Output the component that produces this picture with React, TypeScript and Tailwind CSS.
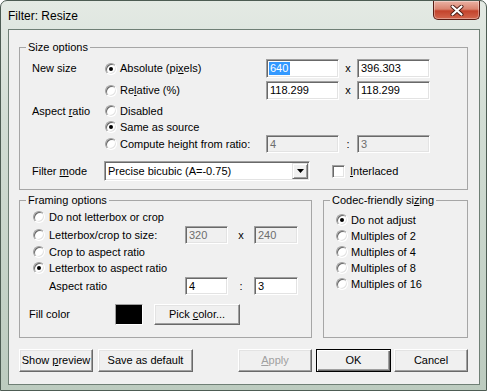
import React from 'react';

// Win32 classic-style controls inside an Aero frame

function Radio({ on }: { on?: boolean }) {
  return (
    <span className="flex h-[12px] w-[12px] shrink-0 items-center justify-center rounded-full border border-t-[#a0a0a0] border-l-[#a0a0a0] border-b-white border-r-white bg-white shadow-[inset_1px_1px_0_#696969,inset_-1px_-1px_0_#e3e3e3]">
      {on && <span className="h-[4px] w-[4px] rounded-full bg-black" />}
    </span>
  );
}

function Check() {
  return (
    <span className="block h-[13px] w-[13px] shrink-0 border border-t-[#a0a0a0] border-l-[#a0a0a0] border-b-white border-r-white bg-white shadow-[inset_1px_1px_0_#696969,inset_-1px_-1px_0_#e3e3e3]" />
  );
}

function Edit({
  value,
  className,
  disabled,
  selected,
}: {
  value: string;
  className: string;
  disabled?: boolean;
  selected?: boolean;
}) {
  return (
    <div
      className={
        'flex shrink-0 items-center border border-t-[#a0a0a0] border-l-[#a0a0a0] border-b-white border-r-white pl-[2px] shadow-[inset_1px_1px_0_#696969,inset_-1px_-1px_0_#e3e3e3] ' +
        (disabled ? 'bg-[#f0f0f0] text-[#6d6d6d] ' : 'bg-white ') +
        className
      }
    >
      <span className={selected ? 'bg-[#3399ff] pr-[2px] pl-[1px] text-white' : 'pl-[1px]'}>{value}</span>
    </div>
  );
}

function Btn({
  children,
  className,
  isDefault,
  disabled,
}: {
  children: React.ReactNode;
  className: string;
  isDefault?: boolean;
  disabled?: boolean;
}) {
  const frame = isDefault
    ? 'border border-black shadow-[inset_1px_1px_0_#fff,inset_-1px_-1px_0_#696969,inset_-2px_-2px_0_#a0a0a0]'
    : 'border border-t-white border-l-white border-b-[#696969] border-r-[#696969] shadow-[inset_-1px_-1px_0_#a0a0a0,inset_1px_1px_0_#e3e3e3]';
  return (
    <div
      className={
        'flex h-[23px] shrink-0 items-center justify-center bg-[#f0f0f0] ' +
        frame +
        (disabled ? ' text-[#a0a0a0]' : '') +
        ' ' +
        className
      }
    >
      {children}
    </div>
  );
}

function Group({
  title,
  className,
  children,
}: {
  title: React.ReactNode;
  className: string;
  children: React.ReactNode;
}) {
  return (
    <fieldset className={'shrink-0 border border-[#a6a6a6] p-0 ' + className}>
      <legend className="ml-[6px] px-[2px] leading-[13px]">{title}</legend>
      {children}
    </fieldset>
  );
}

export default function App() {
  return (
    <div className="flex h-[391px] w-[487px] flex-col overflow-hidden rounded-t-[7px] border border-[#4d5c53] bg-[linear-gradient(180deg,#e4eae4_0%,#d2ddd4_30%,#bccbbf_100%)] font-['Liberation_Sans',Arial,sans-serif] text-[11px] leading-[13px] text-black">
      {/* Title bar */}
      <div className="flex h-[28px] shrink-0 items-start justify-between pl-[7px]">
        <span className="pt-[8px] text-[12px] leading-[14px]">Filter: Resize</span>
        <div className="mr-[6px] flex h-[19px] w-[47px] items-center justify-center rounded-b-[5px] border border-t-0 border-[#5a1d14] bg-[linear-gradient(180deg,#ebb2a4_0%,#da8470_45%,#c3432c_55%,#d3674e_100%)] shadow-[inset_0_0_0_1px_rgba(255,255,255,0.35)]">
          <svg width="14" height="11" viewBox="0 0 14 11">
            <path d="M2.5 1.5 L11.5 9.5 M11.5 1.5 L2.5 9.5" stroke="#4a1c14" strokeWidth="4" strokeLinecap="round" />
            <path d="M2.5 1.5 L11.5 9.5 M11.5 1.5 L2.5 9.5" stroke="#ffffff" strokeWidth="2.2" strokeLinecap="round" />
          </svg>
        </div>
      </div>

      {/* Client area */}
      <div className="ml-[7px] flex h-[356px] w-[472px] shrink-0 flex-col border border-[#6f7f75] bg-[#f0f0f0] pl-[10px]">
        <Group title="Size options" className="mt-[11px] h-[149px] w-[449px]">
          <div className="flex flex-col pl-[12px]">
            <div className="mt-[5px] flex h-[19px] items-center">
              <span className="w-[72px]">New size</span>
              <div className="flex w-[162px] items-center gap-[3px] pl-[1px]">
                <Radio on />
                <span>
                  Absolute (pi<u>x</u>els)
                </span>
              </div>
              <Edit className="h-[19px] w-[73px]" value="640" selected />
              <span className="w-[18px] text-center">x</span>
              <Edit className="h-[19px] w-[73px]" value="396.303" />
            </div>
            <div className="mt-[3px] flex h-[19px] items-center">
              <span className="w-[72px]" />
              <div className="flex w-[162px] items-center gap-[3px] pl-[1px]">
                <Radio />
                <span>
                  Re<u>l</u>ative (%)
                </span>
              </div>
              <Edit className="h-[19px] w-[73px]" value="118.299" />
              <span className="w-[18px] text-center">x</span>
              <Edit className="h-[19px] w-[73px]" value="118.299" />
            </div>
            <div className="mt-[3px] flex h-[16px] items-center">
              <span className="w-[72px]">
                Aspect <u>r</u>atio
              </span>
              <div className="flex items-center gap-[3px] pl-[1px]">
                <Radio />
                <span>Disabled</span>
              </div>
            </div>
            <div className="flex h-[16px] items-center">
              <span className="w-[72px]" />
              <div className="flex items-center gap-[3px] pl-[1px]">
                <Radio on />
                <span>Same as source</span>
              </div>
            </div>
            <div className="flex h-[18px] items-center">
              <span className="w-[72px]" />
              <div className="flex w-[162px] items-center gap-[3px] pl-[1px]">
                <Radio />
                <span>Compute height from ratio:</span>
              </div>
              <Edit className="h-[18px] w-[73px]" value="4" disabled />
              <span className="w-[18px] text-center">:</span>
              <Edit className="h-[18px] w-[73px]" value="3" disabled />
            </div>
            <div className="mt-[8px] flex h-[20px] items-center">
              <span className="w-[72px]">
                Filter <u>m</u>ode
              </span>
              <div className="flex h-[20px] w-[206px] items-stretch border border-t-[#a0a0a0] border-l-[#a0a0a0] border-b-white border-r-white bg-white p-[1px] shadow-[inset_1px_1px_0_#696969,inset_-1px_-1px_0_#e3e3e3]">
                <span className="flex flex-1 items-center pl-[2px]">Precise bicubic (A=-0.75)</span>
                <span className="flex w-[16px] items-center justify-center border border-t-[#e3e3e3] border-l-[#e3e3e3] border-b-[#696969] border-r-[#696969] bg-[#f0f0f0] shadow-[inset_1px_1px_0_#fff,inset_-1px_-1px_0_#a0a0a0]">
                  <svg width="7" height="4" viewBox="0 0 7 4">
                    <path d="M0 0 H7 L3.5 4 Z" fill="#000" />
                  </svg>
                </span>
              </div>
              <span className="ml-[22px]">
                <Check />
              </span>
              <span className="ml-[5px]">
                <u>I</u>nterlaced
              </span>
            </div>
          </div>
        </Group>

        <div className="mt-[4px] flex gap-[11px]">
          <Group title="Framing options" className="h-[144px] w-[293px]">
            <div className="flex flex-col pl-[13px]">
              <div className="mt-[2px] flex h-[16px] items-center gap-[4px]">
                <Radio />
                <span>Do not letterbox or crop</span>
              </div>
              <div className="mt-[1px] flex h-[18px] items-center">
                <div className="flex w-[152px] items-center gap-[4px]">
                  <Radio />
                  <span>Letterbox/crop to size:</span>
                </div>
                <Edit className="h-[18px] w-[43px]" value="320" disabled />
                <span className="w-[26px] text-center">x</span>
                <Edit className="h-[18px] w-[44px]" value="240" disabled />
              </div>
              <div className="flex h-[16px] items-center gap-[4px]">
                <Radio />
                <span>Crop to aspect ratio</span>
              </div>
              <div className="flex h-[16px] items-center gap-[4px]">
                <Radio on />
                <span>Letterbox to aspect ratio</span>
              </div>
              <div className="mt-[1px] flex h-[18px] items-center">
                <span className="w-[152px] pl-[16px]">Aspect ratio</span>
                <Edit className="h-[18px] w-[43px]" value="4" />
                <span className="w-[26px] text-center">:</span>
                <Edit className="h-[18px] w-[44px]" value="3" />
              </div>
              <div className="mt-[9px] ml-[-4px] flex h-[21px] items-center">
                <span className="w-[86px]">Fill color</span>
                <span className="block h-[21px] w-[28px] border border-t-[#a0a0a0] border-l-[#a0a0a0] border-b-white border-r-white bg-black" />
                <Btn className="ml-[11px] !h-[21px] w-[86px]">
                  <span>
                    Pick <u>c</u>olor...
                  </span>
                </Btn>
              </div>
            </div>
          </Group>

          <Group
            title={
              <span>
                Codec-friendly si<u>z</u>ing
              </span>
            }
            className="h-[144px] w-[145px]"
          >
            <div className="flex flex-col pl-[12px]">
              <div className="mt-[5px] flex h-[16px] items-center gap-[3px]">
                <Radio on />
                <span>Do not adjust</span>
              </div>
              {['Multiples of 2', 'Multiples of 4', 'Multiples of 8', 'Multiples of 16'].map((t) => (
                <div key={t} className="flex h-[16px] items-center gap-[3px]">
                  <Radio />
                  <span>{t}</span>
                </div>
              ))}
            </div>
          </Group>
        </div>

        <div className="mt-[11px] flex">
          <Btn className="w-[74px]">
            <span>
              Show <u>p</u>review
            </span>
          </Btn>
          <Btn className="ml-[5px] w-[95px]">Save as default</Btn>
          <Btn className="ml-[45px] w-[74px]" disabled>
            <span>
              <u>A</u>pply
            </span>
          </Btn>
          <Btn className="ml-[4px] w-[75px]" isDefault>
            OK
          </Btn>
          <Btn className="ml-[3px] w-[74px]">Cancel</Btn>
        </div>
      </div>
    </div>
  );
}
